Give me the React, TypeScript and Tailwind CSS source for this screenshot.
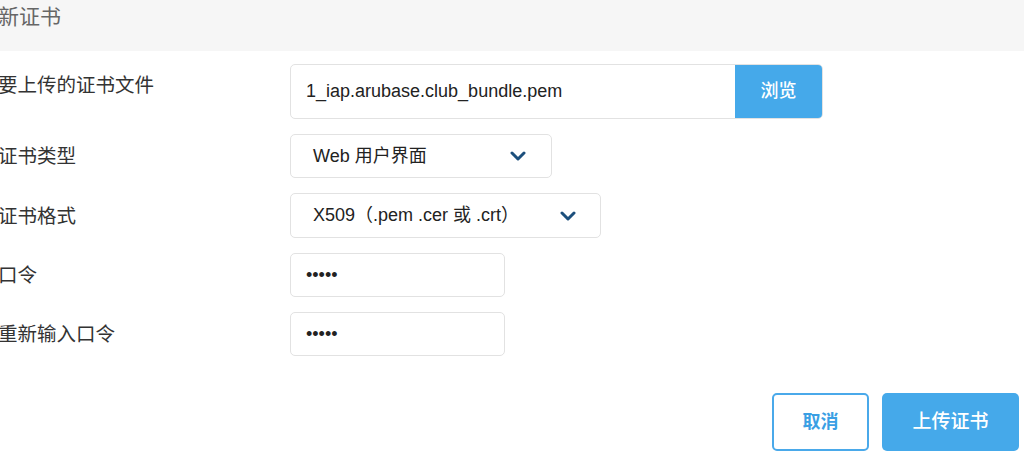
import React from "react";

const font = { fontFamily: '"Liberation Sans", "Noto Sans CJK SC", sans-serif' };

function Chevron() {
  return (
    <svg width="16" height="10" viewBox="0 0 16 10" className="shrink-0">
      <path d="M2 2 L8 8 L14 2" fill="none" stroke="#1c4f7c" strokeWidth="3" strokeLinecap="round" strokeLinejoin="round" />
    </svg>
  );
}

function Row({ label, children, top = false }: { label: string; children: React.ReactNode; top?: boolean }) {
  return (
    <div className={`flex ${top ? "items-start" : "items-center"}`}>
      <div className={`-ml-[2px] w-[292px] shrink-0 text-[19.5px] leading-[26px] text-[#333] ${top ? "pt-[8px]" : ""}`}>{label}</div>
      {children}
    </div>
  );
}

export default function App() {
  return (
    <div className="w-[1024px] h-[457px] overflow-hidden bg-white" style={font}>
      <div className="h-[51px] bg-[#f6f6f6] flex items-start pt-[4px]">
        <div className="-ml-[2px] text-[21px] leading-[26px] text-[#666]">新证书</div>
      </div>
      <div className="flex flex-col pt-[13px] gap-[15px]">
        <Row label="要上传的证书文件" top>
          <div className="flex h-[55px] w-[533px] rounded-[5px] border border-[#e2e2e2] overflow-hidden">
            <div className="flex-1 flex items-center pl-[15px] text-[18px] text-[#222]">1_iap.arubase.club_bundle.pem</div>
            <div className="w-[87px] bg-[#45a9ea] flex items-center justify-center text-white text-[18px] font-medium">浏览</div>
          </div>
        </Row>
        <Row label="证书类型">
          <div className="flex items-center justify-between h-[44px] w-[262px] rounded-[5px] border border-[#e2e2e2] pl-[22px] pr-[25px] text-[18px] text-[#222]">
            <span>Web 用户界面</span>
            <Chevron />
          </div>
        </Row>
        <Row label="证书格式">
          <div className="flex items-center justify-between h-[45px] w-[311px] rounded-[5px] border border-[#e2e2e2] pl-[22px] pr-[24px] text-[18px] text-[#222]">
            <span>X509（.pem .cer 或 .crt）</span>
            <Chevron />
          </div>
        </Row>
        <Row label="口令">
          <div className="flex items-center h-[44px] w-[215px] rounded-[5px] border border-[#e2e2e2] pl-[15px] text-[18px] text-[#222]">•••••</div>
        </Row>
        <Row label="重新输入口令">
          <div className="flex items-center h-[44px] w-[215px] rounded-[5px] border border-[#e2e2e2] pl-[15px] text-[18px] text-[#222]">•••••</div>
        </Row>
      </div>
      <div className="flex justify-end gap-[13px] pr-[5px] pt-[37px]">
        <div className="w-[97px] h-[58px] rounded-[5px] border-2 border-[#4aa9ea] flex items-center justify-center text-[18px] font-bold text-[#3a9fe4]">取消</div>
        <div className="w-[137px] h-[58px] rounded-[5px] bg-[#45a9ea] flex items-center justify-center text-[19px] text-white font-medium">上传证书</div>
      </div>
    </div>
  );
}
